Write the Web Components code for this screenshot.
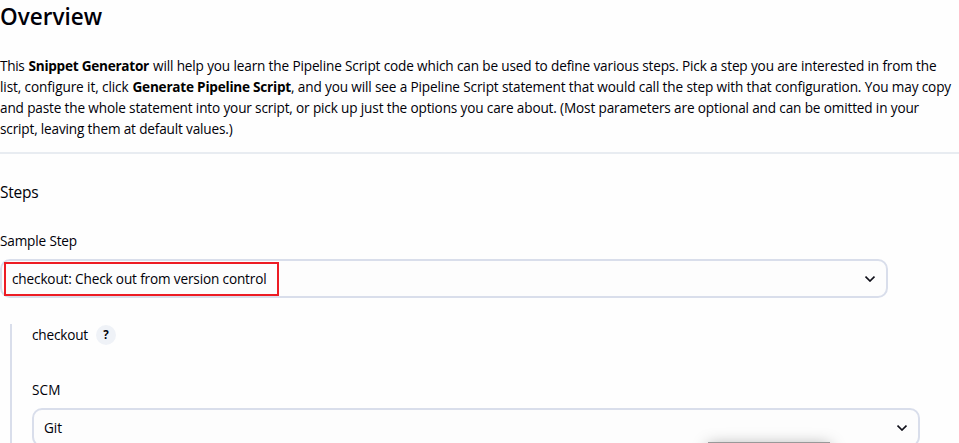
<!DOCTYPE html>
<html lang="en">
<head>
<meta charset="utf-8">
<title>Snippet Generator</title>
<style>
html, body { margin: 0; height: 443px; overflow: hidden; background: #fefefe; }
body { font: 13.6px/21px "Open Sans", "Noto Sans", sans-serif; color: #000008; }
</style>
</head>
<body>
<snippet-page></snippet-page>
<script>
// A run of text tracked so that it fills the width it is given.
class TextRun extends HTMLElement {
  connectedCallback() {
    const root = this.attachShadow({ mode: 'open' });
    root.innerHTML = `<style>
      :host { display: inline-block; white-space: nowrap; vertical-align: top; }
      :host([bold]) { font-weight: 700; color: #000; }
      </style><span><slot></slot></span>`;
    const width = Number(this.getAttribute('width'));
    const span = root.querySelector('span');
    const natural = span.getBoundingClientRect().width;
    span.style.letterSpacing = (width - natural) / this.textContent.length + 'px';
    this.style.width = width + 'px';
  }
}

class HelpButton extends HTMLElement {
  connectedCallback() {
    this.attachShadow({ mode: 'open' }).innerHTML = `<style>
      :host { display: flex; width: 20px; height: 20px; border-radius: 50%; background: #eff2f7;
        align-items: center; justify-content: center; font-size: 11.5px; line-height: 18px; font-weight: 700; }
      </style><span>?</span>`;
  }
}

class SelectBox extends HTMLElement {
  connectedCallback() {
    this.attachShadow({ mode: 'open' }).innerHTML = `<style>
      :host { display: flex; box-sizing: border-box; width: 888px; height: 39px; padding: 0 11px 0 10px;
        border: 2px solid #d9deeb; border-radius: 10px; background: #fdfdfd;
        align-items: center; justify-content: space-between; position: relative; }
      :host([marked])::after { content: ""; position: absolute; left: 2px; top: 1px; width: 271px; height: 30px;
        border: 2px solid #ed1c24; }
      svg { display: block; }
      </style><slot></slot>
      <svg width="10" height="6" viewBox="0 0 10 6" fill="none" stroke="#10101a" stroke-width="1.7"><path d="M.5 .6 5 5 9.5 .6"/></svg>`;
  }
}

class SnippetPage extends HTMLElement {
  connectedCallback() {
    this.attachShadow({ mode: 'open' }).innerHTML = `<style>
      :host { display: flex; flex-direction: column; height: 443px; position: relative; overflow: hidden; }
      h1 { margin: 0; height: 55px; box-sizing: border-box; font-size: 22.5px; line-height: 33px; font-weight: 600; }
      .line { display: flex; height: 21px; }
      .rule { height: 2px; margin-top: 13px; background: #e8ecf1; }
      .steps { font-size: 15.5px; margin-top: 28px; height: 21px; }
      .label { margin-top: 27px; height: 29px; }
      .nested { margin: 26px 0 0 10px; padding-left: 20px; border-left: 2px solid #d9deeb; height: 119px; }
      .title { display: flex; gap: 8px; height: 22px; align-items: center; }
      .title text-run { align-self: flex-start; }
      .scm { margin-top: 33px; height: 29px; }
      .tip { position: absolute; left: 708px; top: 442px; width: 122px; height: 20px; background: #999; box-shadow: 0 3px 16px rgba(0,0,0,.35); }
      </style>
      <h1><text-run width="102">Overview</text-run></h1>
      <div class="line"><text-run width="24.5" style="margin-right:4px">This</text-run><text-run bold width="120.5" style="margin-right:4px">Snippet Generator</text-run><text-run width="783.5">will help you learn the Pipeline Script code which can be used to define various steps. Pick a step you are interested in from the</text-run></div>
      <div class="line"><text-run width="128.5" style="margin-right:4px">list, configure it, click</text-run><text-run bold width="158.5">Generate Pipeline Script</text-run><text-run width="660">, and you will see a Pipeline Script statement that would call the step with that configuration. You may copy</text-run></div>
      <div class="line"><text-run width="919">and paste the whole statement into your script, or pick up just the options you care about. (Most parameters are optional and can be omitted in your</text-run></div>
      <div class="line"><text-run width="232.5">script, leaving them at default values.)</text-run></div>
      <div class="rule"></div>
      <div class="steps"><text-run width="38.5">Steps</text-run></div>
      <div class="label"><text-run width="77">Sample Step</text-run></div>
      <select-box marked><text-run width="254.5">checkout: Check out from version control</text-run></select-box>
      <div class="nested">
        <div class="title"><text-run width="56">checkout</text-run><help-button></help-button></div>
        <div class="scm"><text-run width="28.5">SCM</text-run></div>
        <select-box><text-run width="18">Git</text-run></select-box>
      </div>
      <div class="tip"></div>`;
  }
}
customElements.define('text-run', TextRun);
customElements.define('help-button', HelpButton);
customElements.define('select-box', SelectBox);
customElements.define('snippet-page', SnippetPage);
</script>
</body>
</html>
